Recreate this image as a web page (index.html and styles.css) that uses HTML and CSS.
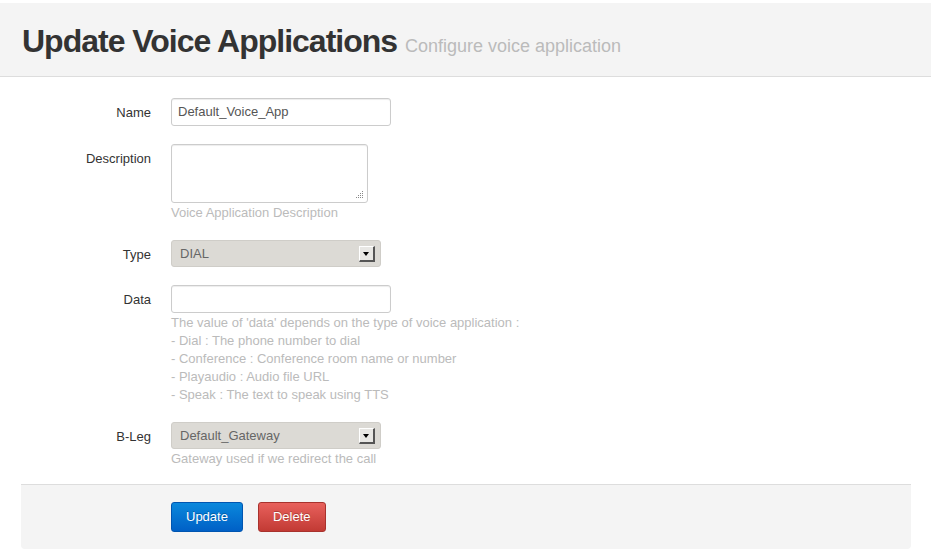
FILE: index.html
```html
<!DOCTYPE html>
<html>
<head>
<meta charset="utf-8">
<link rel="stylesheet" href="styles.css">
</head>
<body>
<div class="page">
  <div class="page-header">
    <h1>Update Voice Applications <small>Configure voice application</small></h1>
  </div>
  <form class="form">
    <div class="row">
      <label class="label">Name</label>
      <div class="controls">
        <div class="input wide">Default_Voice_App</div>
      </div>
    </div>
    <div class="row">
      <label class="label">Description</label>
      <div class="controls">
        <div class="textarea">
          <svg class="grip" width="9" height="9" viewBox="0 0 9 9"><g fill="#888"><rect x="7" y="1" width="1" height="1"/><rect x="5" y="3" width="1" height="1"/><rect x="7" y="3" width="1" height="1"/><rect x="3" y="5" width="1" height="1"/><rect x="5" y="5" width="1" height="1"/><rect x="7" y="5" width="1" height="1"/><rect x="1" y="7" width="1" height="1"/><rect x="3" y="7" width="1" height="1"/><rect x="5" y="7" width="1" height="1"/><rect x="7" y="7" width="1" height="1"/></g></svg>
        </div>
        <p class="help">Voice Application Description</p>
      </div>
    </div>
    <div class="row">
      <label class="label">Type</label>
      <div class="controls">
        <div class="select"><span>DIAL</span><span class="arrow"></span></div>
      </div>
    </div>
    <div class="row">
      <label class="label">Data</label>
      <div class="controls">
        <div class="input wide"></div>
        <p class="help">The value of 'data' depends on the type of voice application :<br>- Dial : The phone number to dial<br>- Conference : Conference room name or number<br>- Playaudio : Audio file URL<br>- Speak : The text to speak using TTS</p>
      </div>
    </div>
    <div class="row last">
      <label class="label">B-Leg</label>
      <div class="controls">
        <div class="select"><span>Default_Gateway</span><span class="arrow"></span></div>
        <p class="help">Gateway used if we redirect the call</p>
      </div>
    </div>
    <div class="form-actions">
      <button type="button" class="btn btn-primary">Update</button>
      <button type="button" class="btn btn-danger">Delete</button>
    </div>
  </form>
</div>
</body>
</html>
```
FILE: styles.css
```css
html, body {
  margin: 0;
  padding: 0;
  background: #fff;
}
body {
  font-family: "Liberation Sans", Arial, sans-serif;
  font-size: 13px;
  line-height: 18px;
  color: #333;
}
.page {
  padding-top: 3px;
}
.page-header {
  width: 931px;
  height: 73px;
  background: #f4f4f4;
  border-bottom: 1px solid #dddddd;
  box-sizing: content-box;
  display: flex;
  align-items: center;
}
.page-header h1 {
  margin: 0 0 0 22px;
  font-size: 32px;
  font-weight: bold;
  letter-spacing: -1px;
  color: #333;
  line-height: 40px;
  padding-top: 8px;
}
.page-header small {
  font-size: 18px;
  font-weight: normal;
  letter-spacing: 0;
  color: #bbbbbb;
}
.form {
  margin: 21px 22px 0 21px;
}
.row {
  display: flex;
  align-items: flex-start;
  margin-bottom: 18px;
}
.row.last {
  margin-bottom: 16px;
}
.label {
  width: 130px;
  text-align: right;
  padding-top: 6px;
  flex: none;
}
.controls {
  margin-left: 20px;
}
.input {
  box-sizing: border-box;
  height: 28px;
  border: 1px solid #cccccc;
  border-radius: 3px;
  padding: 4px 6px;
  color: #555;
  box-shadow: inset 0 1px 1px rgba(0,0,0,0.075);
  background: #fff;
}
.wide {
  width: 220px;
}
.textarea {
  position: relative;
  box-sizing: border-box;
  width: 197px;
  height: 59px;
  border: 1px solid #cccccc;
  border-radius: 3px;
  background: #fff;
  box-shadow: inset 0 1px 1px rgba(0,0,0,0.075);
}
.grip {
  position: absolute;
  right: 3px;
  bottom: 3px;
}
.help {
  margin: 1px 0 0 0;
  color: #bbbbbb;
}
.select {
  box-sizing: border-box;
  width: 210px;
  height: 27px;
  background: #dcdad5;
  border: 1px solid #cfcdc8;
  border-radius: 3px;
  display: flex;
  align-items: center;
  justify-content: space-between;
  padding: 1px 5px 0 8px;
  color: #666;
}
.arrow {
  position: relative;
  box-sizing: border-box;
  width: 16px;
  height: 16px;
  background: #e8e7e4;
  border-top: 1px solid #fff;
  border-left: 1px solid #fff;
  border-right: 2px solid #555;
  border-bottom: 2px solid #555;
}
.arrow::after {
  content: "";
  position: absolute;
  left: 3px;
  top: 5px;
  border-left: 3px solid transparent;
  border-right: 3px solid transparent;
  border-top: 4px solid #000;
}
.form-actions {
  background: #f4f4f4;
  border-top: 1px solid #dddddd;
  padding: 17px 0 17px 150px;
  border-radius: 0 0 4px 4px;
  display: flex;
  gap: 15px;
}
.btn {
  font-family: "Liberation Sans", Arial, sans-serif;
  font-size: 13px;
  line-height: 20px;
  padding: 4px 14px;
  border-radius: 3px;
  color: #fff;
  cursor: pointer;
  text-shadow: 0 -1px 0 rgba(0,0,0,0.25);
}
.btn-primary {
  background: linear-gradient(#0a88dc, #0060c6);
  border: 1px solid #0055b0;
}
.btn-danger {
  background: linear-gradient(#e8615c, #c23a34);
  border: 1px solid #a8322d;
}
```
